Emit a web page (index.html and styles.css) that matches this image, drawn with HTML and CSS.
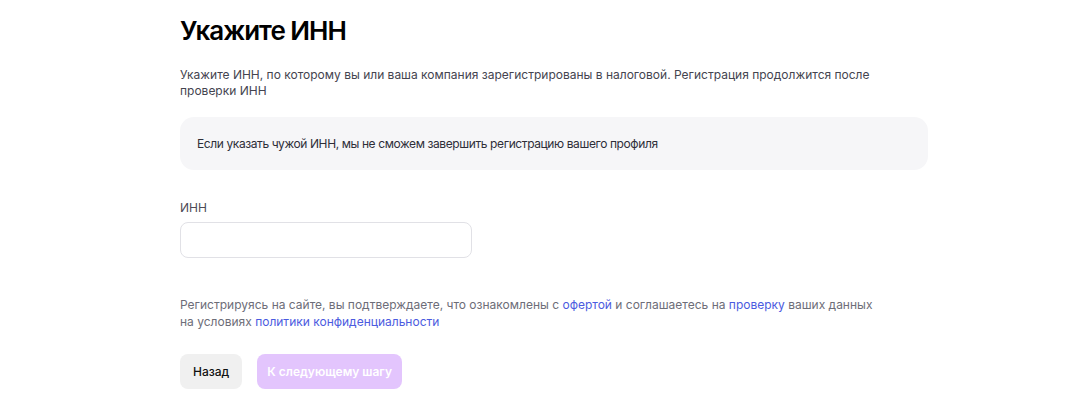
FILE: index.html
```html
<!DOCTYPE html>
<html lang="ru">
<head>
<meta charset="utf-8">
<link rel="stylesheet" href="styles.css">
</head>
<body>
<main class="page">
  <h1 class="title">Укажите ИНН</h1>
  <p class="lead">Укажите ИНН, по которому вы или ваша компания зарегистрированы в налоговой. Регистрация продолжится после проверки ИНН</p>
  <div class="notice">Если указать чужой ИНН, мы не сможем завершить регистрацию вашего профиля</div>
  <label class="field">
    <span class="field-label">ИНН</span>
    <input class="field-input" type="text">
  </label>
  <p class="legal">Регистрируясь на сайте, вы подтверждаете, что ознакомлены с <a href="#">офертой</a> и соглашаетесь на <a href="#">проверку</a> ваших данных на условиях <a href="#">политики конфиденциальности</a></p>
  <div class="actions">
    <button class="btn btn-back" type="button">Назад</button>
    <button class="btn btn-next" type="button">К следующему шагу</button>
  </div>
</main>
</body>
</html>
```
FILE: styles.css
```css
* { box-sizing: border-box; }
html, body { margin: 0; background: #fff; }
body { font-family: Inter, "Noto Sans", sans-serif; color: #242424; }
.page {
  padding: 14px 0 0 180px;
  width: 928px;
  display: flex;
  flex-direction: column;
}
.title {
  margin: 0;
  font-size: 26px;
  line-height: 34px;
  font-weight: 600;
  color: #000;
  letter-spacing: -1px;
}
.lead {
  margin: 19px 0 0;
  font-size: 12px;
  line-height: 16px;
  color: #44444f;
  max-width: 710px;
}
.notice {
  margin-top: 18px;
  background: #f6f6f8;
  border-radius: 14px;
  height: 53px;
  display: flex;
  align-items: center;
  padding: 0 17px;
  font-size: 12px;
  letter-spacing: -0.4px;
  color: #2e2e38;
}
.field {
  margin-top: 30px;
  display: flex;
  flex-direction: column;
  gap: 6px;
  width: 292px;
}
.field-label {
  font-size: 12px;
  line-height: 16px;
  color: #4e4a56;
}
.field-input {
  height: 36px;
  border: 1px solid #e1e1e6;
  border-radius: 8px;
  background: #fff;
  font: inherit;
  padding: 0 12px;
  outline: none;
}
.legal {
  margin: 38px 0 0;
  font-size: 12px;
  line-height: 17px;
  color: #6d6d78;
  max-width: 700px;
}
.legal a { color: #4b5be0; text-decoration: none; }
.actions {
  margin-top: 24px;
  display: flex;
  gap: 15px;
}
.btn {
  height: 35px;
  border: none;
  border-radius: 8px;
  font-family: inherit;
  font-size: 12px;
  padding: 0 10px;
  white-space: nowrap;
}
.btn-back { background: #f0f0f0; color: #111; font-weight: 500; padding: 0 13px; }
.btn-next { background: #e3c5fd; color: #fff; font-weight: 600; }
```
